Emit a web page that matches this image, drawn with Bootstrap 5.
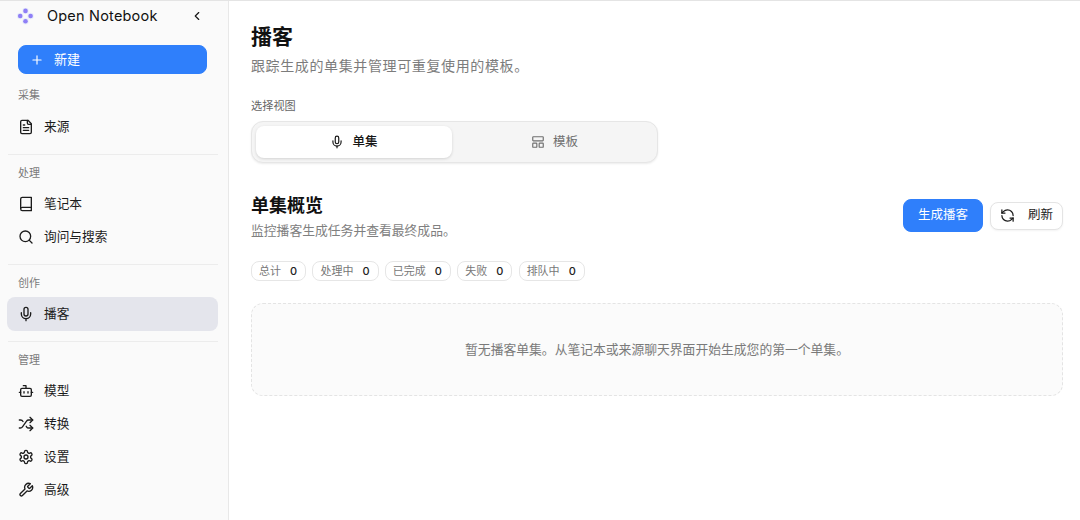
<!DOCTYPE html>
<html lang="zh-CN">
<head>
<meta charset="utf-8">
<title>播客</title>
<link href="https://cdn.jsdelivr.net/npm/bootstrap@5.3.0/dist/css/bootstrap.min.css" rel="stylesheet">
<style>
html,body{height:520px;overflow:hidden}
body{font-family:Inter,"Noto Sans CJK SC",sans-serif;color:#171717;background:#fff;border-top:1px solid #e4e4e4}
svg.ico{fill:none;stroke:currentColor;stroke-width:2;stroke-linecap:round;stroke-linejoin:round;flex:none}
.side{width:229px;height:519px;background:#fafafa;border-right:1px solid #e8e8e8;padding:0 10px 0 7px;flex:none}
.brand{height:30px;padding:0 14px 0 10px}
.brand-name{font-size:14.5px;font-weight:400;letter-spacing:.2px;margin-left:13px;color:#111}
.new-btn{margin:14px 0 0 11px;width:189px;height:29px;padding:0 0 0 11px;background:#2f7ffb;border:1px solid #2f7ffb;border-radius:8px;color:#fff;font-size:13px;gap:10px}
.new-btn:hover{background:#2f7ffb;color:#fff}
.grp-label{font-size:11px;line-height:16px;color:#7b7b7b;padding-left:11px;margin-bottom:7px}
.grp-first{margin-top:13px}
.grp-tight{margin-bottom:6px}
.nav-item-x{height:33px;padding:0 11px;gap:10px;color:#1c1c1c;font-size:12.7px;border-radius:8px}
.nav-item-x:hover{color:#1c1c1c}
.nav-active{background:#e4e5ec;height:34px}
.sep{height:1px;background:#ececec;margin:10px 0 10px 1px;opacity:1;border:0}
.sep-wide{margin-top:11px}
.main-area{padding:0 17px 0 22px;min-width:0}
.page-title{font-size:21px;line-height:28px;font-weight:700;margin:22px 0 0;color:#111}
.page-sub{font-size:14px;line-height:20px;color:#7c7c7c;margin:5px 0 0;letter-spacing:.62px}
.view-label{font-size:11.2px;line-height:16px;color:#666;margin:22px 0 7px}
.seg{width:407px;height:42px;background:#f5f5f5;border:1px solid #e6e6e6;border-radius:12px;padding:4px;box-shadow:0 1px 2px rgba(0,0,0,.08)}
.seg-tab{height:32px;border-radius:8px;font-size:12.5px;gap:8px;color:#6f6f6f}
.seg-on{width:196px;background:#fff;color:#161616;font-weight:500;box-shadow:0 1px 3px rgba(0,0,0,.14)}
.seg-off{flex:1;padding-left:4px}
.over-head{margin-top:30px}
.over-title{font-size:18px;line-height:26px;font-weight:700;margin:0;color:#111}
.over-sub{font-size:12.8px;line-height:18px;color:#808080;margin:3px 0 0}
.over-actions{margin-top:6px;gap:7px}
.gen-btn{background:#2f7ffb;border:1px solid #2f7ffb;color:#fff;height:33px;width:80px;padding:0;border-radius:8px;font-size:12.5px}
.gen-btn:hover{background:#2f7ffb;color:#fff}
.ref-btn{background:#fff;border:1px solid #e4e4e4;color:#1a1a1a;height:28px;width:73px;padding:0 9px;border-radius:8px;font-size:12.5px;box-shadow:0 1px 2px rgba(0,0,0,.05)}
.ref-btn:hover{background:#fff;color:#1a1a1a}
.pills{margin-top:21px;gap:6.3px}
.pill-x{height:20px;padding:0 8px 0 7px;border:1px solid #e6e6e6;border-radius:8px;font-size:11px;color:#777;gap:9px}
.pill-x b{font-family:Inter,sans-serif;font-weight:500;color:#222}
.empty-box{height:93px;margin-top:22px;padding-top:1px;border:1px dashed #e4e4e4;border-radius:12px;background:#fbfbfb;font-size:12.8px;color:#7a7a7a}
</style>
</head>
<body>
<svg width="0" height="0" class="d-block position-absolute">
<defs><linearGradient id="dotg" x1="0" y1="0" x2="0" y2="1"><stop offset="0" stop-color="#b07cf6"/><stop offset="1" stop-color="#6f8cfa"/></linearGradient></defs>
<symbol id="i-file" viewBox="0 0 24 24"><path d="M15 2H6a2 2 0 0 0-2 2v16a2 2 0 0 0 2 2h12a2 2 0 0 0 2-2V7Z"/><path d="M14 2v4a2 2 0 0 0 2 2h4"/><path d="M10 9H8"/><path d="M16 13H8"/><path d="M16 17H8"/></symbol>
<symbol id="i-book" viewBox="0 0 24 24"><path d="M4 19.5v-15A2.5 2.5 0 0 1 6.5 2H20v20H6.5a2.5 2.5 0 0 1 0-5H20"/></symbol>
<symbol id="i-search" viewBox="0 0 24 24"><circle cx="11" cy="11" r="8"/><path d="m21 21-4.3-4.3"/></symbol>
<symbol id="i-mic" viewBox="0 0 24 24"><path d="M12 2a3 3 0 0 0-3 3v7a3 3 0 0 0 6 0V5a3 3 0 0 0-3-3Z"/><path d="M19 10v2a7 7 0 0 1-14 0v-2"/><path d="M12 19v3"/></symbol>
<symbol id="i-bot" viewBox="0 0 24 24"><path d="M12 8V4H8"/><rect width="16" height="12" x="4" y="8" rx="2"/><path d="M2 14h2"/><path d="M20 14h2"/><path d="M15 13v2"/><path d="M9 13v2"/></symbol>
<symbol id="i-shuffle" viewBox="0 0 24 24"><path d="M2 18h1.4c1.3 0 2.5-.6 3.3-1.7l6.1-8.6c.7-1.1 2-1.7 3.3-1.7H22"/><path d="m18 2 4 4-4 4"/><path d="M2 6h1.9c1.5 0 2.9.9 3.6 2.2"/><path d="M22 18h-5.9c-1.3 0-2.6-.7-3.3-1.8l-.5-.8"/><path d="m18 14 4 4-4 4"/></symbol>
<symbol id="i-gear" viewBox="0 0 24 24"><path d="M12.22 2h-.44a2 2 0 0 0-2 2v.18a2 2 0 0 1-1 1.73l-.43.25a2 2 0 0 1-2 0l-.15-.08a2 2 0 0 0-2.73.73l-.22.38a2 2 0 0 0 .73 2.73l.15.1a2 2 0 0 1 1 1.72v.51a2 2 0 0 1-1 1.74l-.15.09a2 2 0 0 0-.73 2.73l.22.38a2 2 0 0 0 2.73.73l.15-.08a2 2 0 0 1 2 0l.43.25a2 2 0 0 1 1 1.73V20a2 2 0 0 0 2 2h.44a2 2 0 0 0 2-2v-.18a2 2 0 0 1 1-1.73l.43-.25a2 2 0 0 1 2 0l.15.08a2 2 0 0 0 2.73-.73l.22-.39a2 2 0 0 0-.73-2.73l-.15-.08a2 2 0 0 1-1-1.74v-.5a2 2 0 0 1 1-1.74l.15-.09a2 2 0 0 0 .73-2.73l-.22-.38a2 2 0 0 0-2.73-.73l-.15.08a2 2 0 0 1-2 0l-.43-.25a2 2 0 0 1-1-1.73V4a2 2 0 0 0-2-2z"/><circle cx="12" cy="12" r="3"/></symbol>
<symbol id="i-wrench" viewBox="0 0 24 24"><path d="M14.7 6.3a1 1 0 0 0 0 1.4l1.6 1.6a1 1 0 0 0 1.4 0l3.77-3.77a6 6 0 0 1-7.94 7.94l-6.91 6.91a2.12 2.12 0 0 1-3-3l6.91-6.91a6 6 0 0 1 7.94-7.94l-3.76 3.76z"/></symbol>
<symbol id="i-tpl" viewBox="0 0 24 24"><rect width="18" height="7" x="3" y="3" rx="1"/><rect width="7" height="7" x="3" y="14" rx="1"/><rect width="7" height="7" x="14" y="14" rx="1"/></symbol>
<symbol id="i-refresh" viewBox="0 0 24 24"><path d="M21 12a9 9 0 0 0-9-9 9.75 9.75 0 0 0-6.74 2.74L3 8"/><path d="M3 3v5h5"/><path d="M3 12a9 9 0 0 0 9 9 9.75 9.75 0 0 0 6.74-2.74L21 16"/><path d="M16 16h5v5"/></symbol>
</svg>
<div class="d-flex">
<aside class="side">
  <div class="brand d-flex align-items-center">
    <svg width="17" height="17" viewBox="0 0 17 17">
      <g fill="#c9d6fb" opacity=".35"><circle cx="8.5" cy="2.9" r="3.2"/><circle cx="3.2" cy="8" r="3.2"/><circle cx="13.6" cy="8" r="3.2"/><circle cx="8.5" cy="13.2" r="3.2"/></g>
      <g fill="#8f7ff6"><circle cx="8.5" cy="2.9" r="2.3"/><circle cx="3.2" cy="8" r="2.3"/><circle cx="13.6" cy="8" r="2.3"/><circle cx="8.5" cy="13.2" r="2.3"/></g>
    </svg>
    <span class="brand-name flex-grow-1">Open Notebook</span>
    <svg class="ico" width="14" height="14" viewBox="0 0 24 24"><path d="m15 18-6-6 6-6"/></svg>
  </div>
  <button class="btn new-btn d-flex align-items-center" type="button">
    <svg class="ico" width="14" height="14" viewBox="0 0 24 24"><path d="M5 12h14"/><path d="M12 5v14"/></svg>新建
  </button>
  <div class="grp-label grp-first">采集</div>
  <nav class="nav flex-column">
    <a class="nav-item-x d-flex align-items-center text-decoration-none" href="#"><svg class="ico" width="16" height="16"><use href="#i-file"/></svg>来源</a>
  </nav>
  <hr class="sep sep-wide">
  <div class="grp-label grp-tight">处理</div>
  <nav class="nav flex-column">
    <a class="nav-item-x d-flex align-items-center text-decoration-none" href="#"><svg class="ico" width="16" height="16"><use href="#i-book"/></svg>笔记本</a>
    <a class="nav-item-x d-flex align-items-center text-decoration-none" href="#"><svg class="ico" width="16" height="16"><use href="#i-search"/></svg>询问与搜索</a>
  </nav>
  <hr class="sep sep-wide">
  <div class="grp-label grp-tight">创作</div>
  <nav class="nav flex-column">
    <a class="nav-item-x nav-active d-flex align-items-center text-decoration-none" href="#"><svg class="ico" width="16" height="16"><use href="#i-mic"/></svg>播客</a>
  </nav>
  <hr class="sep">
  <div class="grp-label grp-tight">管理</div>
  <nav class="nav flex-column">
    <a class="nav-item-x d-flex align-items-center text-decoration-none" href="#"><svg class="ico" width="16" height="16"><use href="#i-bot"/></svg>模型</a>
    <a class="nav-item-x d-flex align-items-center text-decoration-none" href="#"><svg class="ico" width="16" height="16"><use href="#i-shuffle"/></svg>转换</a>
    <a class="nav-item-x d-flex align-items-center text-decoration-none" href="#"><svg class="ico" width="16" height="16"><use href="#i-gear"/></svg>设置</a>
    <a class="nav-item-x d-flex align-items-center text-decoration-none" href="#"><svg class="ico" width="16" height="16"><use href="#i-wrench"/></svg>高级</a>
  </nav>
</aside>
<main class="main-area flex-grow-1">
  <h1 class="page-title">播客</h1>
  <p class="page-sub">跟踪生成的单集并管理可重复使用的模板。</p>
  <div class="view-label">选择视图</div>
  <div class="seg d-flex">
    <div class="seg-tab seg-on d-flex align-items-center justify-content-center"><svg class="ico" width="14" height="14"><use href="#i-mic"/></svg>单集</div>
    <div class="seg-tab seg-off d-flex align-items-center justify-content-center"><svg class="ico" width="14" height="14"><use href="#i-tpl"/></svg>模板</div>
  </div>
  <div class="over-head d-flex justify-content-between align-items-start">
    <div>
      <h2 class="over-title">单集概览</h2>
      <p class="over-sub">监控播客生成任务并查看最终成品。</p>
    </div>
    <div class="over-actions d-flex align-items-center">
      <button class="btn gen-btn" type="button">生成播客</button>
      <button class="btn ref-btn d-flex align-items-center justify-content-between" type="button"><svg class="ico" width="15" height="15"><use href="#i-refresh"/></svg>刷新</button>
    </div>
  </div>
  <div class="pills d-flex">
    <span class="pill-x d-flex align-items-center">总计<b>0</b></span>
    <span class="pill-x d-flex align-items-center">处理中<b>0</b></span>
    <span class="pill-x d-flex align-items-center">已完成<b>0</b></span>
    <span class="pill-x d-flex align-items-center">失败<b>0</b></span>
    <span class="pill-x d-flex align-items-center">排队中<b>0</b></span>
  </div>
  <div class="empty-box d-flex align-items-center justify-content-center">暂无播客单集。从笔记本或来源聊天界面开始生成您的第一个单集。</div>
</main>
</div>
<script src="https://cdn.jsdelivr.net/npm/bootstrap@5.3.0/dist/js/bootstrap.bundle.min.js"></script>
</body>
</html>
